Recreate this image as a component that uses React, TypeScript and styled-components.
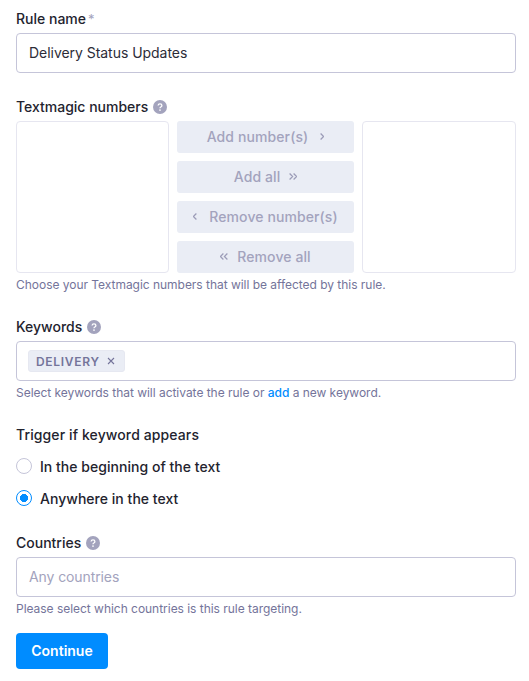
import styled, { createGlobalStyle } from 'styled-components';

const GlobalStyle = createGlobalStyle`
  html, body {
    margin: 0;
    padding: 0;
    background: #fff;
  }
  body {
    font-family: Inter, "Liberation Sans", sans-serif;
    -webkit-font-smoothing: antialiased;
  }
`;

const HelpIcon = () => (
  <StyledHelp viewBox="0 0 14 14">
    <circle cx="7" cy="7" r="7" fill="#a3a3bd" />
    <path
      d="M5.1 5.5C5.2 4.4 6 3.8 7 3.8c1.1 0 1.9.7 1.9 1.6 0 .8-.5 1.2-1.1 1.6-.5.3-.8.6-.8 1.2"
      fill="none"
      stroke="#fff"
      strokeWidth="1.3"
    />
    <circle cx="7" cy="10.1" r=".85" fill="#fff" />
  </StyledHelp>
);

const Chevron = ({ $left, $double }: { $left?: boolean; $double?: boolean }) => (
  <StyledChevron viewBox={$double ? '0 0 8 7' : '0 0 4 7'} $left={$left} $double={$double}>
    <path
      d={$double ? 'M.6.5l3 3-3 3M4.6.5l3 3-3 3' : 'M.6.5l3 3-3 3'}
      fill="none"
      stroke="currentColor"
      strokeWidth="1.25"
    />
  </StyledChevron>
);

const App = () => {
  return (
    <StyledPage>
      <GlobalStyle />
      <StyledField $first>
        <StyledLabelRow>
          <StyledLabel>Rule name</StyledLabel>
          <StyledStar>*</StyledStar>
        </StyledLabelRow>
        <StyledInput>Delivery Status Updates</StyledInput>
      </StyledField>

      <StyledField>
        <StyledLabelRow>
          <StyledLabel>Textmagic numbers</StyledLabel>
          <HelpIcon />
        </StyledLabelRow>
        <StyledPicker>
          <StyledListBox />
          <StyledActions>
            <StyledActionBtn $gap={12}>
              Add number(s)
              <Chevron />
            </StyledActionBtn>
            <StyledActionBtn $gap={9}>
              Add all
              <Chevron $double />
            </StyledActionBtn>
            <StyledActionBtn $gap={12}>
              <Chevron $left />
              Remove number(s)
            </StyledActionBtn>
            <StyledActionBtn $gap={9}>
              <Chevron $left $double />
              Remove all
            </StyledActionBtn>
          </StyledActions>
          <StyledListBox />
        </StyledPicker>
        <StyledHint>Choose your Textmagic numbers that will be affected by this rule.</StyledHint>
      </StyledField>

      <StyledField>
        <StyledLabelRow>
          <StyledLabel>Keywords</StyledLabel>
          <HelpIcon />
        </StyledLabelRow>
        <StyledInput $tags>
          <StyledTag>
            DELIVERY
            <StyledTagClose viewBox="0 0 8 8">
              <path d="M1 1l6 6M7 1L1 7" stroke="currentColor" strokeWidth="1.1" />
            </StyledTagClose>
          </StyledTag>
        </StyledInput>
        <StyledHint>
          Select keywords that will activate the rule or <StyledLink>add</StyledLink> a new keyword.
        </StyledHint>
      </StyledField>

      <StyledField>
        <StyledLabelRow>
          <StyledLabel $wide>Trigger if keyword appears</StyledLabel>
        </StyledLabelRow>
        <StyledRadioGroup>
          <StyledRadioRow>
            <StyledRadio />
            In the beginning of the text
          </StyledRadioRow>
          <StyledRadioRow>
            <StyledRadio $checked />
            Anywhere in the text
          </StyledRadioRow>
        </StyledRadioGroup>
      </StyledField>

      <StyledField>
        <StyledLabelRow>
          <StyledLabel>Countries</StyledLabel>
          <HelpIcon />
        </StyledLabelRow>
        <StyledInput $placeholder>Any countries</StyledInput>
        <StyledHint>Please select which countries is this rule targeting.</StyledHint>
      </StyledField>

      <StyledContinue>Continue</StyledContinue>
    </StyledPage>
  );
};

export default App;

const StyledPage = styled.div`
  width: 500px;
  padding: 10px 13px 12px 16px;
  color: #23232e;
`;

const StyledField = styled.div<{ $first?: boolean }>`
  margin-top: ${(props) => (props.$first ? 0 : 25)}px;
`;

const StyledLabelRow = styled.div`
  display: flex;
  align-items: center;
  gap: 5px;
  height: 18px;
  margin-bottom: 5px;
`;

const StyledLabel = styled.span<{ $wide?: boolean }>`
  font-size: 14px;
  line-height: 18px;
  font-weight: 500;
  color: #23232e;
  letter-spacing: ${(props) => (props.$wide ? '0.11px' : '0')};
`;

const StyledStar = styled.span`
  font-size: 13px;
  line-height: 18px;
  color: #a3a3bd;
  margin-left: -3px;
`;

const StyledHelp = styled.svg`
  width: 14px;
  height: 14px;
  flex: none;
`;

const StyledInput = styled.div<{ $placeholder?: boolean; $tags?: boolean }>`
  box-sizing: border-box;
  height: 40px;
  display: flex;
  align-items: center;
  padding: 0 12px ${(props) => (props.$tags ? 0 : 1)}px;
  border: 1px solid #c5c5d9;
  border-radius: 4px;
  font-size: 14px;
  letter-spacing: ${(props) => (props.$placeholder ? '-0.1px' : '-0.04px')};
  color: ${(props) => (props.$placeholder ? '#a3a3bd' : '#2c2c38')};
`;

const StyledPicker = styled.div`
  display: grid;
  grid-template-columns: 153px 177px 154px;
  gap: 8px;
`;

const StyledListBox = styled.div`
  box-sizing: border-box;
  height: 152px;
  border: 1px solid #e6e6f0;
  border-radius: 4px;
`;

const StyledActions = styled.div`
  display: flex;
  flex-direction: column;
  gap: 8px;
`;

const StyledActionBtn = styled.div<{ $gap: number }>`
  box-sizing: border-box;
  height: 32px;
  display: flex;
  align-items: center;
  justify-content: center;
  gap: ${(props) => props.$gap}px;
  padding-bottom: 1px;
  background: #eaedf5;
  border-radius: 3px;
  font-size: 14px;
  font-weight: 500;
  letter-spacing: 0.1px;
  color: #a3a3bd;
`;

const StyledChevron = styled.svg<{ $left?: boolean; $double?: boolean }>`
  width: ${(props) => (props.$double ? 8 : 4)}px;
  height: 7px;
  flex: none;
  color: #9c9cb8;
  transform: ${(props) => (props.$left ? 'scaleX(-1)' : 'none')};
`;

const StyledHint = styled.div`
  margin-top: 4px;
  font-size: 12px;
  line-height: 16px;
  letter-spacing: -0.03px;
  color: #74749a;
`;

const StyledLink = styled.span`
  color: #008cff;
  font-weight: 500;
`;

const StyledTag = styled.span`
  box-sizing: border-box;
  height: 22px;
  display: inline-flex;
  align-items: center;
  gap: 7px;
  padding: 0 9px 0 7px;
  margin-left: -1px;
  background: #eaedf5;
  border: 1px solid #e6e8f1;
  border-radius: 3px;
  font-size: 12px;
  font-weight: 600;
  letter-spacing: 0.7px;
  color: #74749a;
`;

const StyledTagClose = styled.svg`
  width: 8px;
  height: 8px;
  color: #74749a;
`;

const StyledRadioGroup = styled.div`
  display: flex;
  flex-direction: column;
  gap: 10px;
  margin-top: 11px;
`;

const StyledRadioRow = styled.div`
  height: 22px;
  display: flex;
  align-items: center;
  gap: 8px;
  font-size: 14px;
  font-weight: 500;
  letter-spacing: 0.03px;
  color: #23232e;
`;

const StyledRadio = styled.span<{ $checked?: boolean }>`
  box-sizing: border-box;
  width: 16px;
  height: 16px;
  flex: none;
  border-radius: 50%;
  border: 1px solid ${(props) => (props.$checked ? '#008cff' : '#c5c5d9')};
  background: ${(props) =>
    props.$checked ? 'radial-gradient(circle, #008cff 0 3.8px, #fff 4.3px)' : '#fff'};
`;

const StyledContinue = styled.div`
  box-sizing: border-box;
  width: 92px;
  height: 36px;
  margin-top: 16px;
  padding-bottom: 1px;
  display: flex;
  align-items: center;
  justify-content: center;
  background: #008cff;
  border-radius: 4px;
  color: #fff;
  font-size: 14px;
  font-weight: 600;
`;
